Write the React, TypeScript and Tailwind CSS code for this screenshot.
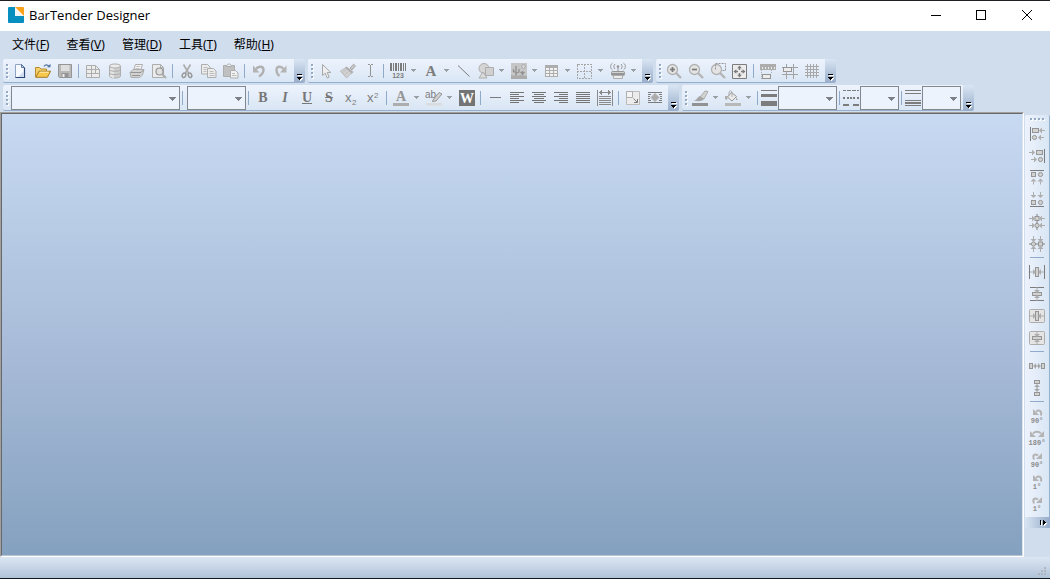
import type { ReactNode } from "react";

const G = "#959595";
const D = "#7c7c7c";
const L = "#adadad";
const F = "#d2d2d2";
const W = "#ececec";

function Svg({ children, crisp = false }: { children: ReactNode; crisp?: boolean }) {
  return (
    <svg
      viewBox="0 0 16 16"
      className="size-4 shrink-0 overflow-visible"
      fill="none"
      shapeRendering={crisp ? "crispEdges" : "auto"}
      aria-hidden="true"
    >
      {children}
    </svg>
  );
}

/* ---------- toolbar parts ---------- */

function Btn({ label, children, enabled = false }: { label: string; children: ReactNode; enabled?: boolean }) {
  return (
    <button type="button" aria-label={label} disabled={!enabled} className="flex size-[22px] shrink-0 items-center justify-center">
      {children}
    </button>
  );
}

function Drop({ label }: { label: string }) {
  return (
    <button type="button" aria-label={label} disabled className="flex h-[22px] w-[11px] shrink-0 items-center pl-[2px]">
      <svg viewBox="0 0 5 3" className="h-[3px] w-[5px]" shapeRendering="crispEdges" aria-hidden="true">
        <path d="M0 0h5v1H4v1H3v1H2V2H1V1H0z" fill="#9a9fa6" />
      </svg>
    </button>
  );
}

function SplitBtn({ label, children }: { label: string; children: ReactNode }) {
  return (
    <div className="flex">
      <Btn label={label}>{children}</Btn>
      <Drop label={`${label}选项`} />
    </div>
  );
}

function Sep() {
  return (
    <div className="flex w-[6px] shrink-0 pl-[2px]">
      <div className="h-[14px] w-px bg-[#8fabc9]" />
    </div>
  );
}

function SideSep() {
  return (
    <div className="flex h-[6px] shrink-0 items-start justify-center pt-[2px]">
      <div className="h-px w-[14px] bg-[#8fabc9]" />
    </div>
  );
}

function Grip() {
  return (
    <div className="flex w-[7px] shrink-0 flex-col items-center gap-[2px]">
      {[0, 1, 2, 3].map((i) => (
        <span key={i} className="size-[2px] bg-[#94a9c4] shadow-[1px_1px_0_#ffffff]" />
      ))}
    </div>
  );
}

function Overflow() {
  return (
    <button
      type="button"
      aria-label="工具栏选项"
      className="flex w-[11px] shrink-0 items-end justify-center self-stretch rounded-r-[2px] bg-linear-to-b from-[#d9e5f3] to-[#98adca] pb-[2px]"
    >
      <svg viewBox="0 0 7 7" className="size-[7px]" shapeRendering="crispEdges" aria-hidden="true">
        <path d="M2 1h5v1H2zM2 4h5v1H6v1H5v1H4V6H3V5H2z" fill="#fff" />
        <path d="M1 0h5v1H1zM1 3h5v1H5v1H4v1H3V5H2V4H1z" fill="#000" />
      </svg>
    </button>
  );
}

function Bar({ label, children, tall = false }: { label: string; children: ReactNode; tall?: boolean }) {
  return (
    <div role="toolbar" aria-label={label} className={tall ? "flex h-[26px]" : "flex h-6"}>
      <div className="flex items-center rounded-l-[2px] border-b border-[#94aecd] bg-linear-to-b from-[#edf3fd] to-[#d9e6f4] pr-[2px]">
        <Grip />
        {children}
      </div>
      <Overflow />
    </div>
  );
}

function Combo({ label, className }: { label: string; className: string }) {
  return (
    <div className={`relative ml-px h-6 shrink-0 ${className}`}>
      <select aria-label={label} disabled className="block h-6 w-full appearance-none border border-[#828790] bg-[#edf3fd] text-xs">
        <option></option>
      </select>
      <svg viewBox="0 0 7 4" className="pointer-events-none absolute right-1 top-[11px] h-1 w-[7px]" shapeRendering="crispEdges" aria-hidden="true">
        <path d="M0 0h7v1H6v1H5v1H4v1H3V3H2V2H1V1H0z" fill="#7d8086" />
      </svg>
    </div>
  );
}

/* ---------- standard icons ---------- */

const NewIcon = () => (
  <Svg>
    <path d="M2.500 1.500h6l3 3v10h-9z" fill="#f6faff" stroke="#8fa3c4" />
    <path d="M11.500 5v9.500h-9" stroke="#2b4674" strokeWidth="1.200" />
    <path d="M8.500 1.500v3h3z" fill="#c8d6ec" stroke="#405b8a" strokeWidth=".8" />
    <path d="M5 14l6-6v6z" fill="#cfdcf0" />
  </Svg>
);
const OpenIcon = () => (
  <Svg>
    <path d="M.5 14V4.500h4l1.500 1.500h5.500v3" fill="#f3d069" stroke="#b98c34" />
    <path d="M.8 14.300L4 8.200h11.600l-3.200 6.100z" fill="#f8c84b" stroke="#a47a26" />
    <path d="M4.700 9.200h9" stroke="#fff0b5" />
    <path d="M9 3.300c1.500-2 4-2 5 .6" stroke="#54759f" strokeWidth="1.300" />
    <path d="M12 4.300h3.500V.8z" fill="#54759f" />
  </Svg>
);
const SaveIcon = () => (
  <Svg>
    <path d="M1.500 1.500h13v13h-12l-1-1z" fill="#b8b8b8" stroke={G} />
    <path d="M4 2h8.500v6H4z" fill="#dedede" />
    <path d="M4.500 10h7v4.500h-7z" fill="#949494" />
    <path d="M5.500 11h2v3h-2z" fill={W} />
  </Svg>
);
const PageSetupIcon = () => (
  <Svg>
    <path d="M1.500 2.500h9l4 4v8h-13z" fill={W} stroke={L} />
    <path d="M10.500 2.500v4h4M1.500 6.500h9M1.500 10.500h13M6.500 2.500v12M10.500 6.500v4" stroke={L} />
  </Svg>
);
const DatabaseIcon = () => (
  <Svg>
    <path d="M2.500 3v10c0 2.600 11 2.600 11 0V3" fill="#cdcdcd" stroke={L} />
    <path d="M4 5v9M6 5v10" stroke={W} strokeWidth="1.500" />
    <ellipse cx="8" cy="3" rx="5.500" ry="2" fill={W} stroke={L} />
    <path d="M2.500 6.500c0 2.400 11 2.400 11 0M2.500 9.800c0 2.400 11 2.400 11 0" stroke={L} />
  </Svg>
);
const PrintIcon = () => (
  <Svg>
    <path d="M4.500 7.500l2-6h7l-2 6z" fill="#f4f4f4" stroke={L} />
    <path d="M7 3.500h4M6.500 5.500h4" stroke="#c4c4c4" />
    <path d="M1 9.500l3-3h11l-1.500 5.500-3 2.500H2z" fill={F} stroke={L} />
    <path d="M1.500 9.500h10.500l2.500-2.500M3 12.500h8" stroke={G} />
  </Svg>
);
const PreviewIcon = () => (
  <Svg>
    <path d="M1.500 1.500h8l3 3v10h-11z" fill={W} stroke={L} />
    <path d="M9.500 1.500v3h3" stroke={L} />
    <circle cx="8.500" cy="8.500" r="3.500" fill="#e0e0e0" stroke={G} strokeWidth="1.200" />
    <path d="M11 11l4 4" stroke={L} strokeWidth="2.200" />
  </Svg>
);
const CutIcon = () => (
  <Svg>
    <path d="M4.500 1.500l5 8.500M11.500 1.500l-5 8.500" stroke={L} strokeWidth="1.700" />
    <ellipse cx="5" cy="12.300" rx="1.700" ry="2.300" stroke={G} strokeWidth="1.400" transform="rotate(25 5 12.300)" />
    <ellipse cx="11" cy="12.300" rx="1.700" ry="2.300" stroke={G} strokeWidth="1.400" transform="rotate(-25 11 12.300)" />
  </Svg>
);
const CopyIcon = () => (
  <Svg>
    <path d="M.5 1.500h6l2.500 2.500v7H.5z" fill={W} stroke={L} />
    <path d="M2.500 4.500h4M2.500 6.500h3M2.500 8.500h3" stroke="#bdbdbd" />
    <path d="M6.500 5.500h6l2.500 2.500v6.500H6.500z" fill={W} stroke={L} />
    <path d="M8.500 8.500h4M8.500 10.500h5M8.500 12.500h5" stroke="#bdbdbd" />
  </Svg>
);
const PasteIcon = () => (
  <Svg>
    <path d="M.5 2.500h11v11H.5z" fill="#c0c0c0" stroke={L} />
    <path d="M3.500 3.500v-1l2-1.500h1l2 1.500v1z" fill={W} stroke={L} />
    <path d="M7.500 7.500h5l2.500 2.500v5h-7.500z" fill="#f1f1f1" stroke={L} />
    <path d="M9 10.500h3M9 12.500h4.500" stroke="#bdbdbd" />
  </Svg>
);
const UndoIcon = () => (
  <Svg>
    <path d="M5 6c2-3 7.500-3.200 7.500 1 0 2.500-1.500 4.500-4.500 6.500" stroke="#b0b0b0" strokeWidth="2.400" />
    <path d="M2 2.500v7h6.500z" fill="#b4b4b4" />
  </Svg>
);
const RedoIcon = () => (
  <Svg>
    <path d="M10.500 6c-2-3-7-3.200-7 1 0 2.500 1 4.500 3 6" stroke="#b4b4b4" strokeWidth="2.400" />
    <path d="M13.500 2.500v7H7z" fill="#b4b4b4" />
  </Svg>
);

/* ---------- object icons ---------- */

const PointerIcon = () => (
  <Svg>
    <path d="M4.500 1.500v11l2.700-2.300 2 4.800 2-.9-2-4.600h3.600z" fill="#eeeeee" stroke="#a8a8a8" />
  </Svg>
);
const PainterIcon = () => (
  <Svg>
    <path d="M10 5l3.500-3.800 2 1.600L12 7z" fill="#c4c4c4" stroke={L} />
    <path d="M6.500 3.500l7 5.500-2 2-7-5.500z" fill="#acacac" />
    <path d="M5.500 5l6 5-5 5L.5 8z" fill={F} stroke="#b8b8b8" />
    <path d="M2.500 9.500l4-3M4.500 12l4-3.500" stroke="#bdbdbd" />
  </Svg>
);
const IBeamIcon = () => (
  <Svg crisp>
    <path d="M6 1h2v1h1V1h2v1H9v11h2v1H9v-1H8v1H6v-1h2V2H6z" fill={G} />
  </Svg>
);
const BarcodeIcon = () => (
  <Svg crisp>
    <path d="M0 0h2v8H0zM3 0h1v8H3zM5 0h2v8H5zM8 0h1v8H8zM10 0h2v8h-2zM13 0h1v8h-1zM15 0h1v8h-1z" fill={D} />
    <text x="8" y="15" textAnchor="middle" fontFamily="Liberation Sans, sans-serif" fontSize="7" fontWeight="700" fill={D}>123</text>
  </Svg>
);
const TextIcon = () => (
  <Svg>
    <text x="8" y="13" textAnchor="middle" fontFamily="Liberation Serif, serif" fontSize="15" fontWeight="700" fill={D}>A</text>
  </Svg>
);
const LineIcon = () => (
  <Svg>
    <path d="M2 2.500l11.500 11" stroke={D} />
  </Svg>
);
const ShapesIcon = () => (
  <Svg>
    <circle cx="6" cy="5.500" r="5" fill="#d5d5d5" stroke={L} />
    <path d="M7.500 4.500h8v8h-8z" fill="#d0d0d0" stroke={L} />
    <path d="M5 9l4 6H1z" fill="#dcdcdc" stroke={L} />
  </Svg>
);
const PictureIcon = () => (
  <Svg>
    <path d="M0 0h16v16H0z" fill="#c6c6c6" />
    <path d="M0 12l5 1 5-1 6 1v3H0z" fill="#ababab" />
    <circle cx="12.500" cy="3.500" r="1.800" fill="#dedede" stroke="#a8a8a8" />
    <path d="M5 3v10M2.500 6v2.500l2.500 1M8 6v3l-3 1.500M11.500 8v4M9.500 9l2 2 2-2" stroke="#8e8e8e" strokeWidth="1.200" />
  </Svg>
);
const TableIcon = () => (
  <Svg crisp>
    <path d="M1 2h13v12H1z" fill={L} />
    <path d="M2 5h3v2H2zM6 5h3v2H6zM10 5h3v2h-3zM2 8h3v2H2zM6 8h3v2H6zM10 8h3v2h-3zM2 11h3v2H2zM6 11h3v2H6zM10 11h3v2h-3z" fill="#f1f1f1" />
  </Svg>
);
const DashedGridIcon = () => (
  <Svg crisp>
    <path d="M.5 1.500h14v14H.5zM7.500 1v15M0 8.500h15" stroke="#a6a6a6" strokeDasharray="2 1" />
  </Svg>
);
const EncoderIcon = () => (
  <Svg>
    <path d="M2.500 0C0 2 0 5 2.500 7M5 1C3.500 2.500 3.500 4.500 5 6M13.500 0c2.500 2 2.500 5 0 7M11 1c1.500 1.500 1.500 3.500 0 5" stroke={G} />
    <circle cx="8" cy="3.500" r="1.300" fill={G} />
    <path d="M8 4v4" stroke={G} />
    <rect x="1.500" y="8.500" width="13" height="4" rx="1" fill={F} stroke={G} />
    <path d="M2 10h12v2H2z" fill={G} />
    <path d="M3.500 12.500h9v3h-9z" fill={W} stroke={L} />
  </Svg>
);

/* ---------- view icons ---------- */

const Lens = ({ minus = false, plus = false }: { minus?: boolean; plus?: boolean }) => (
  <>
    <path d="M10 10l5 5" stroke="#b5b5b5" strokeWidth="2.400" />
    <circle cx="6.500" cy="6.500" r="5" fill="#e4e4e4" stroke="#b2b2b2" strokeWidth="1.300" />
    {(minus || plus) && <path d="M4 6.500h5" stroke={D} strokeWidth="1.700" />}
    {plus && <path d="M6.500 4v5" stroke={D} strokeWidth="1.700" />}
  </>
);
const ZoomInIcon = () => <Svg><Lens plus /></Svg>;
const ZoomOutIcon = () => <Svg><Lens minus /></Svg>;
const ZoomAreaIcon = () => (
  <Svg>
    <Lens />
    <path d="M5.500 6.500V.5h10v7h-4" stroke={G} strokeDasharray="2 1" />
  </Svg>
);
const FitIcon = () => (
  <Svg>
    <path d="M.5 1.500h14v14H.5z" fill={W} stroke={D} />
    <path d="M7.500 2.500l2.300 2.800H5.200zM7.500 14.500l2.300-2.800H5.200zM1.500 8.500l2.800-2.300v4.600zM13.500 8.500l-2.800-2.300v4.600z" fill={D} />
    <path d="M7.500 5v2M7.500 10v2M4 8.500h2M9 8.500h2" stroke={D} strokeWidth="1.500" />
  </Svg>
);
const RulerIcon = () => (
  <Svg crisp>
    <path d="M0 1h16v6H0z" fill="#adadad" />
    <path d="M2 4h1v2H2zM5 4h1v2H5zM8 4h1v2H8zM11 4h1v2h-1zM14 4h1v2h-1z" fill={W} />
    <path d="M1.500 7v9M11.500 7v3" stroke={L} strokeDasharray="1 1" />
    <path d="M2.500 11.500h8v4h-8z" fill={W} stroke={G} />
  </Svg>
);
const SnapIcon = () => (
  <Svg crisp>
    <path d="M4.500 1v15M11.500 1v15M0 4.500h16M0 11.500h16" stroke="#a2a2a2" />
    <path d="M1.500 4.500h8v4h-8z" fill={W} stroke={G} />
  </Svg>
);
const GridIcon = () => (
  <Svg crisp>
    <path d="M3.500 1v14M6.500 1v14M9.500 1v14M12.500 1v14M1 3.500h14M1 6.500h14M1 9.500h14M1 12.500h14" stroke="#a8a8a8" />
  </Svg>
);

/* ---------- text formatting icons ---------- */

const HighlightIcon = () => (
  <Svg>
    <text x="-1" y="8" fontFamily="Liberation Sans, sans-serif" fontSize="10" fill={D}>ab</text>
    <path d="M7 10l6-7.500 3 1.500-6 7-3.500.5z" fill={F} stroke={G} />
    <path d="M0 13h16v2.500H0z" fill="#d9dbdd" />
  </Svg>
);
const FontColorIcon = () => (
  <Svg>
    <text x="8" y="11" textAnchor="middle" fontFamily="Liberation Serif, serif" fontSize="14" fontWeight="700" fill={G}>A</text>
    <path d="M0 13h16v3H0z" fill="#adadad" />
  </Svg>
);
const WordIcon = () => (
  <Svg>
    <path d="M0 0h16v16H0z" fill="#747474" />
    <text x="8" y="13" textAnchor="middle" fontFamily="Liberation Serif, serif" fontSize="14" fontWeight="700" fill="#fff">W</text>
  </Svg>
);
const DashIcon = () => (
  <Svg crisp>
    <path d="M3 7h11v1H3z" fill={D} />
  </Svg>
);
const LINES = {
  left: "M1 2h14v1H1zM1 4h9v1H1zM1 6h14v1H1zM1 8h9v1H1zM1 10h14v1H1zM1 12h9v1H1z",
  center: "M1 2h14v1H1zM3 4h10v1H3zM1 6h14v1H1zM3 8h10v1H3zM1 10h14v1H1zM3 12h10v1H3z",
  right: "M1 2h14v1H1zM6 4h9v1H6zM1 6h14v1H1zM6 8h9v1H6zM1 10h14v1H1zM6 12h9v1H6z",
  full: "M1 2h14v1H1zM1 4h14v1H1zM1 6h14v1H1zM1 8h14v1H1zM1 10h14v1H1zM1 12h14v1H1z",
};
const AlignIcon = ({ kind }: { kind: keyof typeof LINES }) => (
  <Svg crisp>
    <path d={LINES[kind]} fill="#747474" />
  </Svg>
);
const FitTextIcon = () => (
  <Svg crisp>
    <path d="M0 0h1v16H0zM15 0h1v16h-1zM2 2h12v1H2zM3 1h1v3H3zM12 1h1v3h-1zM4 0h1v5H4zM11 0h1v5h-1zM2 6h12v1H2zM2 8h12v1H2zM2 10h12v1H2zM2 12h12v1H2zM2 14h12v1H2z" fill="#8a8a8a" />
  </Svg>
);
const ResizeIcon = () => (
  <Svg>
    <path d="M1.500 1.500h13v13h-13z" fill={W} stroke="#bcbcbc" />
    <path d="M1.500 1.500h6v6h-6z" fill="#f4f4f4" stroke={L} />
    <path d="M8.500 8.500l4 4M12.500 9v3.500h-3.500" stroke={D} />
  </Svg>
);
const WrapIcon = () => (
  <Svg>
    <path d="M1 2.500h14M1 4.500h3M12 4.500h3M1 6.500h2M13 6.500h2M1 8.500h2M13 8.500h2M1 10.500h3M12 10.500h3M1 12.500h14" stroke={D} />
    <path d="M8 3.500l4 4-4 4-4-4z" fill="#ababab" stroke={L} />
  </Svg>
);
const PenIcon = () => (
  <Svg>
    <path d="M8 7l5-6 3 .5L12 9z" fill={F} stroke={L} />
    <path d="M8 6l4 3c-2 3-6 2-11 2 4-.5 4-4 7-5z" fill="#a6a6a6" />
    <path d="M0 13h16v3H0z" fill="#929292" />
  </Svg>
);
const BucketIcon = () => (
  <Svg>
    <path d="M6.500 2.500l5 4-4.500 4.500-4.500-4z" fill={W} stroke={G} />
    <path d="M4 6V3c0-3 3-3 3 0v4" stroke={L} />
    <path d="M3 6H0v3l2 1zM11 7l2 3h-2z" fill={L} />
    <path d="M0 13h16v3H0z" fill="#b8b8b8" />
  </Svg>
);
const ThicknessIcon = () => (
  <Svg crisp>
    <path d="M0 0h16v1H0zM0 4h16v3H0zM0 11h16v5H0z" fill={D} />
  </Svg>
);
const DashStyleIcon = () => (
  <Svg crisp>
    <path d="M0 0h3v1H0zM4 0h4v1H4zM9 0h4v1H9zM14 0h2v1h-2zM0 7h2v2H0zM4 7h2v2H4zM7 7h2v2H7zM10 7h2v2h-2zM14 7h2v2h-2zM0 14h6v2H0zM10 14h6v2h-6z" fill={D} />
  </Svg>
);
const CompoundIcon = () => (
  <Svg crisp>
    <path d="M0 0h16v1H0zM0 3h16v1H0zM0 10h16v1H0zM0 12h16v2H0zM0 15h16v1H0z" fill={D} />
  </Svg>
);

/* ---------- arrange icons ---------- */

const arrow = (dir: "l" | "r" | "u" | "d", x: number, y: number) => {
  const turn = { l: 0, u: 90, r: 180, d: 270 }[dir];
  return (
    <g transform={`rotate(${turn} ${x} ${y})`}>
      <path d={`M${x - 3} ${y}l3-3v6z`} fill={L} />
      <path d={`M${x} ${y}h3`} stroke={L} />
    </g>
  );
};
const Box = ({ x, y, w, h }: { x: number; y: number; w: number; h: number }) => (
  <rect x={x} y={y} width={w} height={h} fill={F} stroke={G} />
);
const Dot = ({ x, y }: { x: number; y: number }) => <circle cx={x} cy={y} r="2.100" fill={F} stroke={G} />;

const AlignLeftIcon = () => (
  <Svg><path d="M1.500 1v14" stroke={D} /><Box x={3.500} y={2.500} w={6} h={4} /><Dot x={5.500} y={11.500} />{arrow("l", 13, 4.500)}{arrow("l", 12, 11.500)}</Svg>
);
const AlignRightIcon = () => (
  <Svg><path d="M15.500 1v14" stroke={D} /><Box x={7.500} y={2.500} w={6} h={4} /><Dot x={11.500} y={11.500} />{arrow("r", 3, 4.500)}{arrow("r", 5, 11.500)}</Svg>
);
const AlignTopIcon = () => (
  <Svg><path d="M1 .5h14" stroke={D} /><Box x={2.500} y={2.500} w={4} h={4} /><Dot x={11.500} y={4.500} />{arrow("u", 4.500, 11.500)}{arrow("u", 11.500, 11.500)}</Svg>
);
const AlignBottomIcon = () => (
  <Svg><path d="M1 14.500h14" stroke={D} /><Box x={2.500} y={8.500} w={4} h={4} /><Dot x={11.500} y={10.500} />{arrow("d", 4.500, 3)}{arrow("d", 11.500, 3)}</Svg>
);
const AlignCenterIcon = () => (
  <Svg><path d="M8 0v16" stroke={D} /><Box x={6} y={2.500} w={4} h={4} /><Dot x={8} y={11.500} />{arrow("r", 3, 4.500)}{arrow("l", 13, 4.500)}{arrow("r", 3, 11.500)}{arrow("l", 13, 11.500)}</Svg>
);
const AlignMiddleIcon = () => (
  <Svg><path d="M0 8h16" stroke={D} /><Dot x={4.500} y={8} /><Box x={9.500} y={6} w={4} h={4} />{arrow("d", 4.500, 3)}{arrow("d", 11.500, 3)}{arrow("u", 4.500, 13)}{arrow("u", 11.500, 13)}</Svg>
);
const CenterH = () => (
  <><Box x={6.500} y={3.500} w={3} h={9} />{arrow("r", 4, 8)}{arrow("l", 12, 8)}</>
);
const CenterV = () => (
  <><Box x={3.500} y={6.500} w={9} h={3} />{arrow("d", 8, 4)}{arrow("u", 8, 12)}</>
);
const Frame = () => <rect x=".5" y="1.500" width="15" height="13" rx="1" fill="#e5e5e5" stroke={L} />;
const SpaceHIcon = () => (
  <Svg><Box x={0.500} y={5.500} w={3} h={5} /><Box x={12.500} y={5.500} w={3} h={5} /><path d="M4 8l3-3v6zM12 8L9 5v6z" fill={L} /><path d="M6 8h4" stroke={G} /></Svg>
);
const SpaceVIcon = () => (
  <Svg><Box x={5.500} y={0.500} w={5} h={3} /><Box x={5.500} y={12.500} w={5} h={3} /><path d="M8 4L5 7h6zM8 12L5 9h6z" fill={L} /><path d="M8 6v4" stroke={G} /></Svg>
);

function RotateIcon({ text, dir }: { text: string; dir: "left" | "right" | "both" }) {
  return (
    <svg viewBox="0 0 18 16" className="h-4 w-[18px] overflow-visible" fill="none" aria-hidden="true">
      {dir === "left" && <><path d="M8 3.500c3-2 6-1 5 4" stroke="#b4b4b4" strokeWidth="2" /><path d="M5 1v6h6z" fill="#b4b4b4" /></>}
      {dir === "right" && <><path d="M10 3.500C7 1.500 4 2.500 6 7.500" stroke="#b4b4b4" strokeWidth="2" /><path d="M14 1v6H8z" fill="#b4b4b4" /></>}
      {dir === "both" && <><path d="M5 3.500c2-2.500 6-2.500 8 0" stroke="#b4b4b4" strokeWidth="2" /><path d="M2 1v6h6zM16 1v6h-6z" fill="#b4b4b4" /></>}
      <text x="9" y="15" textAnchor="middle" fontFamily="Liberation Mono, monospace" fontSize="7" fontWeight="700" fill="#8a8a8a">{text}</text>
    </svg>
  );
}

const MENUS = [
  ["文件", "F"],
  ["查看", "V"],
  ["管理", "D"],
  ["工具", "T"],
  ["帮助", "H"],
];

function TitleBar() {
  return (
    <header className="flex h-[31px] shrink-0 items-center border-t border-[#1f1f24] bg-white pb-[2px]">
      <svg viewBox="0 0 16 16" className="ml-2 size-4" aria-hidden="true">
        <path d="M0 1q0-1 1-1h6v9h9v6q0 1-1 1H1q-1 0-1-1z" fill="#078fc0" />
        <path d="M7 0h8q1 0 1 1v8z" fill="#f9a11b" />
        <path d="M7 1v8h8z" fill="#eef6fa" />
      </svg>
      <h1 className="ml-[5px] flex-1 font-['Open_Sans','Noto_Sans_CJK_SC',sans-serif] text-[13px] leading-4 text-black">BarTender Designer</h1>
      <div className="flex h-full">
        <button type="button" aria-label="最小化" className="flex w-11 items-center justify-center">
          <svg viewBox="0 0 10 10" className="size-[10px]" shapeRendering="crispEdges"><path d="M0 5h10v1H0z" /></svg>
        </button>
        <button type="button" aria-label="最大化" className="flex w-[46px] items-center justify-center">
          <svg viewBox="0 0 10 10" className="size-[10px]" shapeRendering="crispEdges"><path d="M.5.5h9v9H.5z" fill="none" stroke="#000" /></svg>
        </button>
        <button type="button" aria-label="关闭" className="flex w-[46px] items-center justify-center">
          <svg viewBox="0 0 10 10" className="size-[10px]"><path d="M0 0l10 10M10 0L0 10" stroke="#000" /></svg>
        </button>
      </div>
    </header>
  );
}

function SideBar() {
  return (
    <div role="toolbar" aria-label="排列" className="mt-[3px] ml-px flex w-[25px] flex-col rounded-t-[2px] border-r border-[#94aecd]">
      <div className="flex flex-col items-center rounded-t-[2px] bg-linear-to-r from-[#edf3fd] to-[#d9e6f4] pb-[2px]">
        <div className="flex h-2 items-center justify-center gap-[2px]">
          {[0, 1, 2, 3].map((i) => (
            <span key={i} className="size-[2px] bg-[#94a9c4] shadow-[1px_1px_0_#ffffff]" />
          ))}
        </div>
        <Btn label="左对齐"><AlignLeftIcon /></Btn>
        <Btn label="右对齐"><AlignRightIcon /></Btn>
        <Btn label="顶端对齐"><AlignTopIcon /></Btn>
        <Btn label="底端对齐"><AlignBottomIcon /></Btn>
        <Btn label="水平居中对齐"><AlignCenterIcon /></Btn>
        <Btn label="垂直居中对齐"><AlignMiddleIcon /></Btn>
        <SideSep />
        <Btn label="水平居中"><Svg><path d="M.5 1v14M15.500 1v14" stroke={D} /><CenterH /></Svg></Btn>
        <Btn label="垂直居中"><Svg><path d="M1 1.500h14M1 14.500h14" stroke={D} /><CenterV /></Svg></Btn>
        <Btn label="模板内水平居中"><Svg><Frame /><CenterH /></Svg></Btn>
        <Btn label="模板内垂直居中"><Svg><Frame /><CenterV /></Svg></Btn>
        <SideSep />
        <Btn label="水平分布"><SpaceHIcon /></Btn>
        <Btn label="垂直分布"><SpaceVIcon /></Btn>
        <SideSep />
        <Btn label="向左旋转 90 度"><RotateIcon text="90°" dir="left" /></Btn>
        <Btn label="旋转 180 度"><RotateIcon text="180°" dir="both" /></Btn>
        <Btn label="向右旋转 90 度"><RotateIcon text="90°" dir="right" /></Btn>
        <Btn label="向左旋转 1 度"><RotateIcon text="1°" dir="left" /></Btn>
        <Btn label="向右旋转 1 度"><RotateIcon text="1°" dir="right" /></Btn>
      </div>
      <button type="button" aria-label="工具栏选项" className="flex h-[11px] items-center justify-end bg-linear-to-r from-[#d9e5f3] to-[#98adca] pr-[2px]">
        <svg viewBox="0 0 7 7" className="size-[7px]" shapeRendering="crispEdges" aria-hidden="true">
          <path d="M1 2h1v5H1zM4 2h1v5H4zM5 3h1v3H5zM6 4h1v1H6z" fill="#fff" />
          <path d="M0 1h1v5H0zM3 1h1v5H3zM4 2h1v3H4zM5 3h1v1H5z" fill="#000" />
        </svg>
      </button>
    </div>
  );
}

const GLYPH = "font-['Liberation_Serif',serif] text-sm/4 font-bold text-[#777777]";

export default function App() {
  return (
    <div className="flex min-h-screen flex-col overflow-hidden bg-[#d0dded] text-black">
      <TitleBar />

      <nav aria-label="主菜单" className="flex h-7 shrink-0 items-center gap-px pl-1 font-['Noto_Sans','Noto_Sans_CJK_SC',sans-serif] text-xs">
        {MENUS.map(([name, key]) => (
          <button key={key} type="button" className="px-2">
            {name}(<span className="underline">{key}</span>)
          </button>
        ))}
      </nav>

      <div className="flex shrink-0 flex-col gap-[2px] pb-px pl-[3px]">
        <div className="flex gap-[3px]">
          <Bar label="标准">
            <Btn label="新建" enabled><NewIcon /></Btn>
            <Btn label="打开" enabled><OpenIcon /></Btn>
            <Btn label="保存"><SaveIcon /></Btn>
            <Sep />
            <Btn label="页面设置"><PageSetupIcon /></Btn>
            <Btn label="数据库"><DatabaseIcon /></Btn>
            <Btn label="打印"><PrintIcon /></Btn>
            <Btn label="打印预览"><PreviewIcon /></Btn>
            <Sep />
            <Btn label="剪切"><CutIcon /></Btn>
            <Btn label="复制"><CopyIcon /></Btn>
            <Btn label="粘贴"><PasteIcon /></Btn>
            <Sep />
            <Btn label="撤消"><UndoIcon /></Btn>
            <Btn label="重做"><RedoIcon /></Btn>
          </Bar>
          <Bar label="对象">
            <Btn label="选择"><PointerIcon /></Btn>
            <Btn label="格式刷"><PainterIcon /></Btn>
            <Btn label="文本光标"><IBeamIcon /></Btn>
            <Sep />
            <SplitBtn label="条形码"><BarcodeIcon /></SplitBtn>
            <SplitBtn label="文本"><TextIcon /></SplitBtn>
            <Btn label="线条"><LineIcon /></Btn>
            <SplitBtn label="形状"><ShapesIcon /></SplitBtn>
            <SplitBtn label="图片"><PictureIcon /></SplitBtn>
            <SplitBtn label="表格"><TableIcon /></SplitBtn>
            <SplitBtn label="布局网格"><DashedGridIcon /></SplitBtn>
            <SplitBtn label="编码器"><EncoderIcon /></SplitBtn>
          </Bar>
          <Bar label="视图">
            <Btn label="放大"><ZoomInIcon /></Btn>
            <Btn label="缩小"><ZoomOutIcon /></Btn>
            <Btn label="缩放到所选"><ZoomAreaIcon /></Btn>
            <Btn label="适合窗口"><FitIcon /></Btn>
            <Sep />
            <Btn label="标尺"><RulerIcon /></Btn>
            <Btn label="对齐到网格"><SnapIcon /></Btn>
            <Btn label="网格"><GridIcon /></Btn>
          </Bar>
        </div>

        <div className="flex gap-[3px]">
          <Bar label="文本格式" tall>
            <Combo label="字体" className="w-[169px]" />
            <Sep />
            <Combo label="字号" className="w-[59px]" />
            <Sep />
            <Btn label="粗体"><span className={GLYPH}>B</span></Btn>
            <Btn label="斜体"><span className={`${GLYPH} italic`}>I</span></Btn>
            <Btn label="下划线"><span className={`${GLYPH} underline`}>U</span></Btn>
            <Btn label="删除线"><span className={`${GLYPH} line-through`}>S</span></Btn>
            <Btn label="下标">
              <Svg>
                <text x="2" y="12" fontFamily="Liberation Sans, sans-serif" fontSize="13" fill={D}>x</text>
                <text x="9" y="15" fontFamily="Liberation Sans, sans-serif" fontSize="8" fill={D}>2</text>
              </Svg>
            </Btn>
            <Btn label="上标">
              <Svg>
                <text x="2" y="12" fontFamily="Liberation Sans, sans-serif" fontSize="13" fill={D}>x</text>
                <text x="9" y="8" fontFamily="Liberation Sans, sans-serif" fontSize="8" fill={D}>2</text>
              </Svg>
            </Btn>
            <Sep />
            <SplitBtn label="字体颜色"><FontColorIcon /></SplitBtn>
            <SplitBtn label="突出显示"><HighlightIcon /></SplitBtn>
            <Btn label="字处理器"><WordIcon /></Btn>
            <Sep />
            <Btn label="单行"><DashIcon /></Btn>
            <Btn label="文本左对齐"><AlignIcon kind="left" /></Btn>
            <Btn label="文本居中"><AlignIcon kind="center" /></Btn>
            <Btn label="文本右对齐"><AlignIcon kind="right" /></Btn>
            <Btn label="两端对齐"><AlignIcon kind="full" /></Btn>
            <Btn label="分散对齐"><FitTextIcon /></Btn>
            <Sep />
            <Btn label="自动调整大小"><ResizeIcon /></Btn>
            <Btn label="文本环绕"><WrapIcon /></Btn>
          </Bar>
          <Bar label="线条格式" tall>
            <SplitBtn label="线条颜色"><PenIcon /></SplitBtn>
            <SplitBtn label="填充颜色"><BucketIcon /></SplitBtn>
            <Sep />
            <ThicknessIcon />
            <Combo label="线条粗细" className="w-[59px]" />
            <Sep />
            <DashStyleIcon />
            <Combo label="虚线样式" className="w-[39px]" />
            <Sep />
            <CompoundIcon />
            <Combo label="复合样式" className="w-[39px]" />
          </Bar>
        </div>
      </div>

      <div className="flex flex-1">
        <main aria-label="工作区" className="flex flex-1 border border-t-[#a0a0a0] border-r-white border-b-white border-l-[#a0a0a0]">
          <div className="flex-1 border border-t-[#696969] border-r-[#dbe3ee] border-b-[#b9c6d6] border-l-[#696969] bg-linear-to-b from-[#c8daf2] via-[#a5b9d6] via-58% to-[#84a1bf]" />
        </main>
        <div className="w-[26px] shrink-0">
          <SideBar />
        </div>
      </div>

      <footer className="flex h-[22px] shrink-0 items-end justify-end border-b border-[#15181f] bg-linear-to-b from-[#dce6f3] to-[#b1c3d8] pr-[3px] pb-px">
        <svg viewBox="0 0 10 10" className="size-[10px]" shapeRendering="crispEdges" aria-hidden="true">
          <path d="M7 0h2v2H7zM4 3h2v2H4zM7 3h2v2H7zM1 6h2v2H1zM4 6h2v2H4zM7 6h2v2H7z" fill="#aeb6bf" />
        </svg>
      </footer>
    </div>
  );
}
